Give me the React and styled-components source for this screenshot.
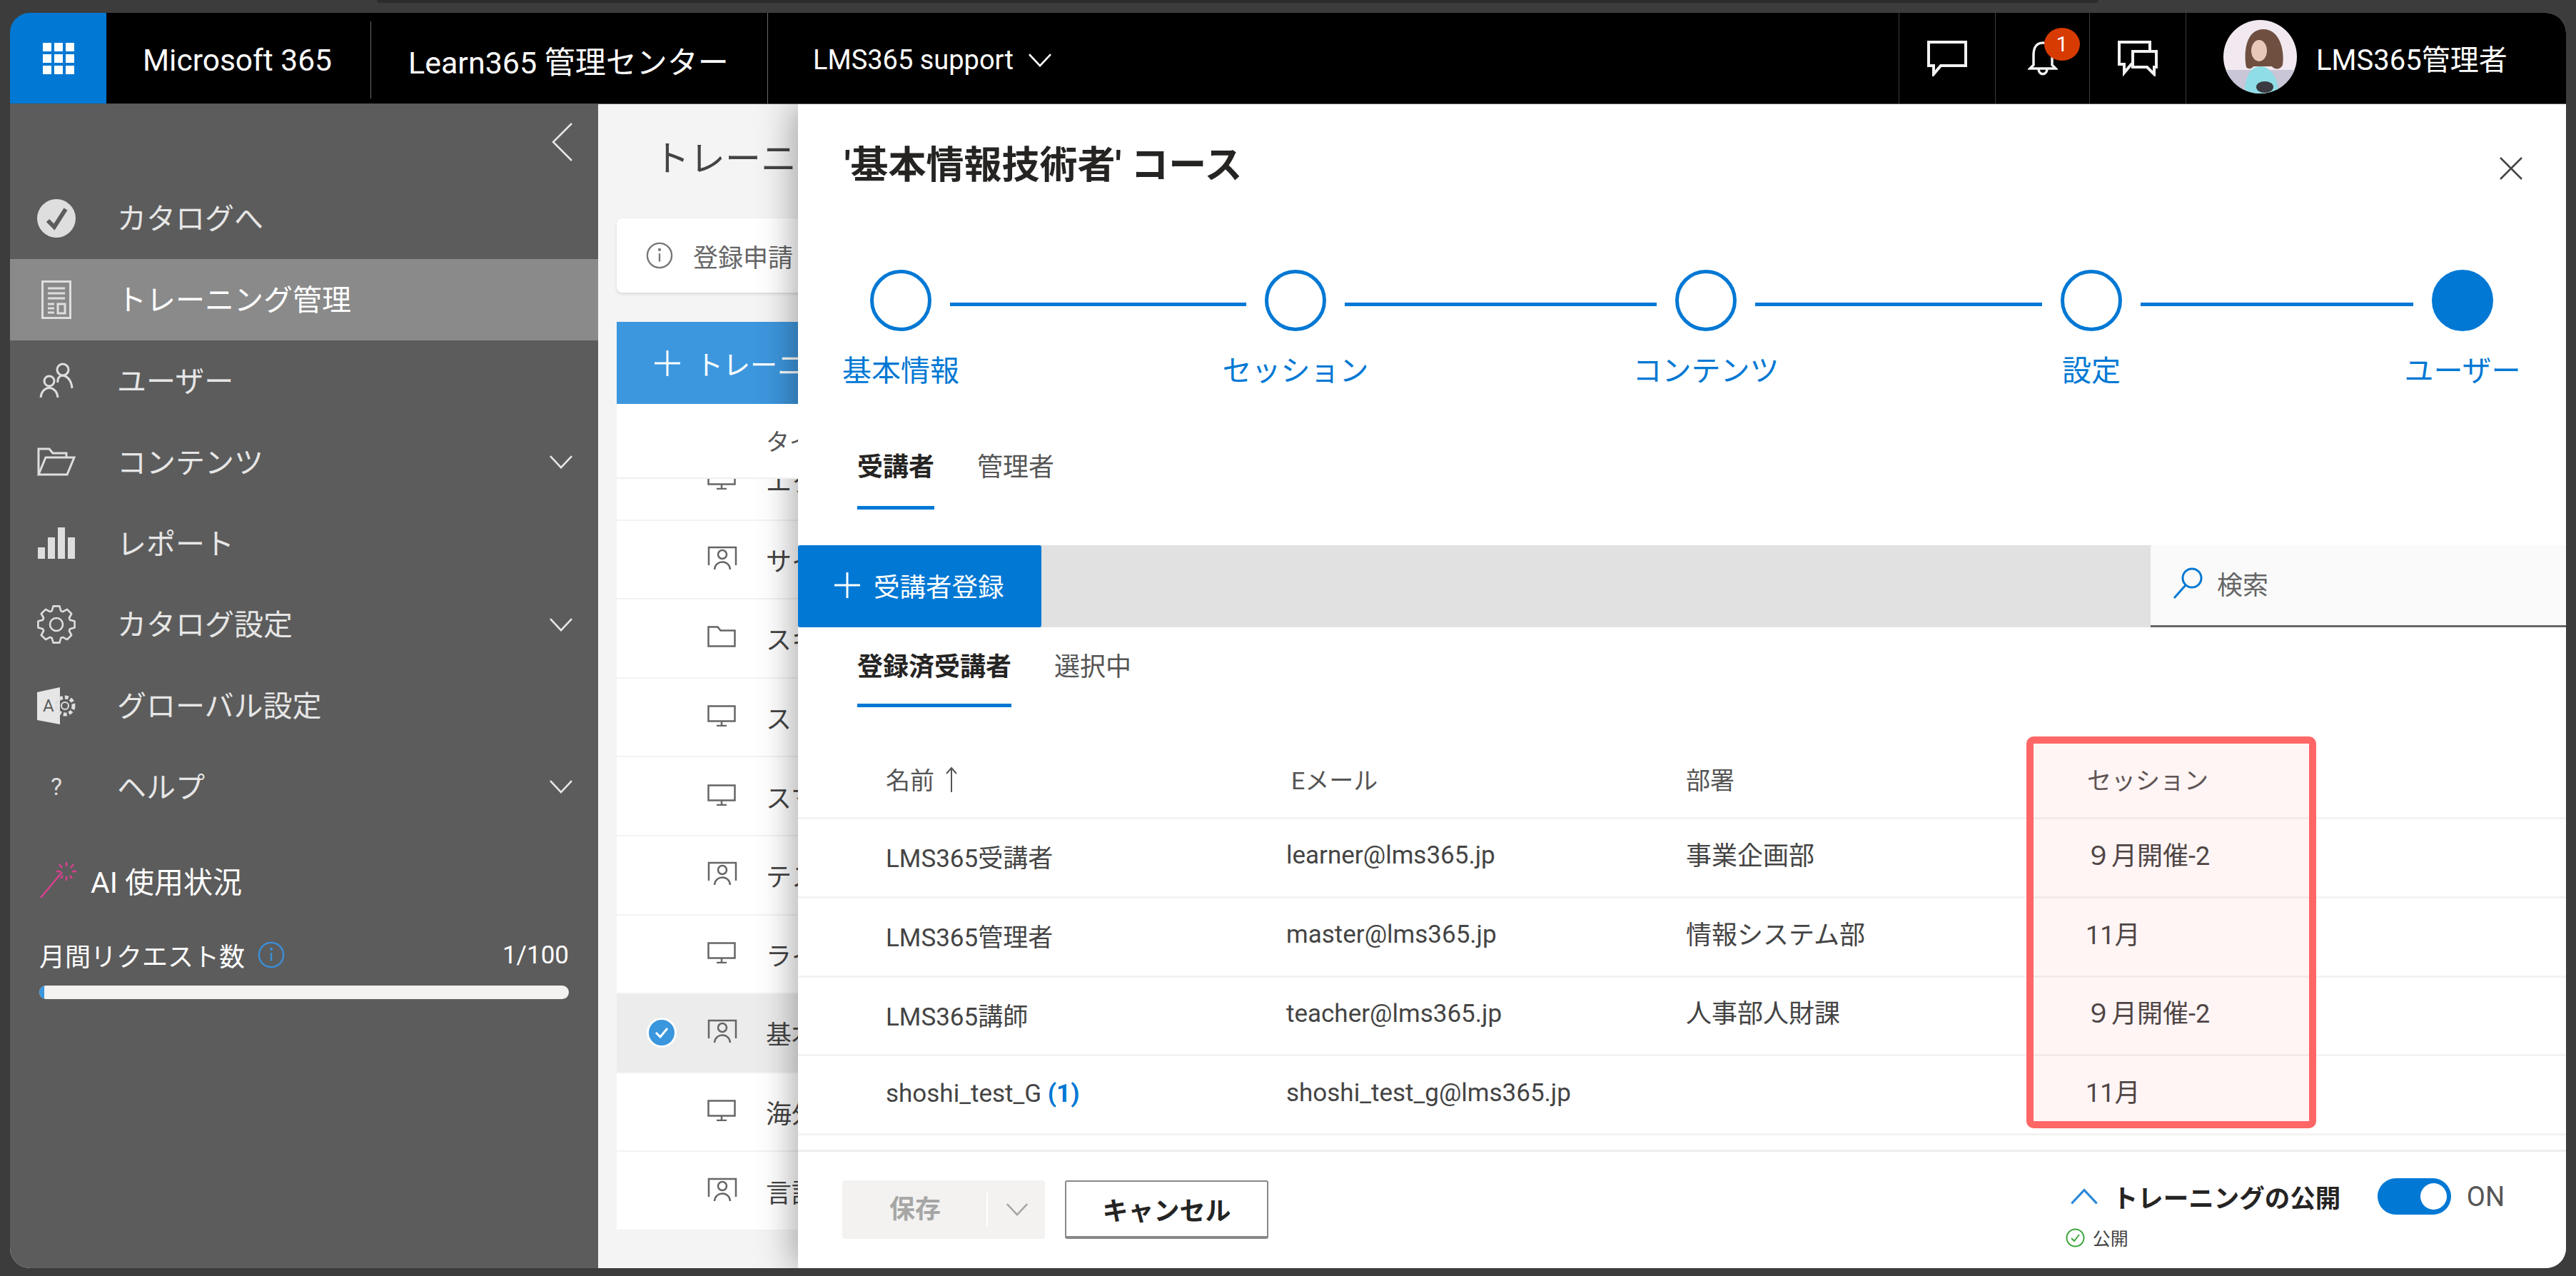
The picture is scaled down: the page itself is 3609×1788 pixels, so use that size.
import { Fragment } from "react";
import styled, { createGlobalStyle } from "styled-components";

const GlobalStyle = createGlobalStyle`
  html, body {
    margin: 0;
    width: 3609px;
    height: 1788px;
    overflow: hidden;
    background: #3c3c3c;
    font-family: Roboto, "Noto Sans CJK JP", sans-serif;
  }
  * { box-sizing: border-box; }
`;

const Page = styled.div`
  width: 3609px;
  height: 1788px;
  padding: 0 14px;
`;

const TopStrip = styled.div`
  width: 2412px;
  height: 4px;
  margin-left: 514px;
  background: #2c2c2c;
  border-radius: 0 0 10px 10px;
`;

const Frame = styled.div`
  margin-top: 14px;
  width: 3581px;
  height: 1759px;
  display: flex;
  flex-direction: column;
  border-radius: 28px;
  overflow: hidden;
  background: #f4f4f4;
`;

/* top bar */
const Header = styled.header`
  height: 128px;
  flex: none;
  display: flex;
  align-items: stretch;
  background: #000;
  color: #fff;
  border-bottom: 1px solid #555;
`;

const Waffle = styled.div`
  width: 135px;
  background: #0078d4;
  display: flex;
  align-items: center;
  justify-content: center;
`;

const WaffleGrid = styled.div`
  display: grid;
  grid-template-columns: repeat(3, 12px);
  grid-auto-rows: 12px;
  gap: 4px;
  span { background: #fff; }
`;

const Brand = styled.div`
  width: ${(p) => p.$width}px;
  padding-left: ${(p) => p.$pad}px;
  padding-top: 5px;
  display: flex;
  align-items: center;
  gap: 20px;
  font-size: ${(p) => p.$size}px;
  white-space: nowrap;
`;

const ShortDivider = styled.div`
  width: 1px;
  height: 108px;
  margin-top: 12px;
  background: #6a6a6a;
`;

const TallDivider = styled.div`
  width: 1px;
  background: #6a6a6a;
`;

const HeaderSpacer = styled.div`
  flex: 1;
`;

const IconCell = styled.div`
  position: relative;
  width: ${(p) => p.$width}px;
  border-left: 1px solid #3b3b3b;
  display: flex;
  align-items: center;
  justify-content: center;
`;

const Badge = styled.span`
  position: absolute;
  left: 68px;
  top: 21px;
  width: 50px;
  height: 46px;
  border-radius: 50%;
  background: #d83b01;
  color: #fff;
  font-size: 29px;
  display: flex;
  align-items: center;
  justify-content: center;
`;

const UserCell = styled.div`
  width: 533px;
  padding-left: 52px;
  padding-bottom: 2px;
  border-left: 1px solid #3b3b3b;
  display: flex;
  align-items: center;
  gap: 27px;
  font-size: 40px;
  white-space: nowrap;
`;

const AvatarSvg = styled.svg`
  width: 103px;
  height: 103px;
  margin-top: -2px;
`;

/* left navigation */
const Body = styled.div`
  flex: 1;
  display: flex;
  min-height: 0;
  overflow: hidden;
`;

const Sidebar = styled.aside`
  width: 824px;
  flex: none;
  background: #5c5c5c;
  color: #e9e9e9;
  display: flex;
  flex-direction: column;
`;

const CollapseRow = styled.div`
  height: 103px;
  padding: 26px 35px 0 0;
  display: flex;
  justify-content: flex-end;
`;

const NavItem = styled.div`
  height: 113.8px;
  padding: 0 35px 0 38px;
  display: flex;
  align-items: center;
  font-size: 41px;
  background: ${(p) => (p.$active ? "#8a8a8a" : "transparent")};
  color: ${(p) => (p.$active ? "#fff" : "#e6e6e6")};
`;

const NavIcon = styled.span`
  width: 54px;
  margin-right: 58px;
  display: flex;
  justify-content: center;
  color: #dedede;
  font-size: 34px;
`;

const NavLabel = styled.span`
  flex: 1;
  padding-bottom: 5px;
`;

const AiTitle = styled.div`
  margin: 46px 0 0 41px;
  height: 56px;
  display: flex;
  align-items: center;
  gap: 18px;
  font-size: 41px;
  color: #fff;
`;

const UsageRow = styled.div`
  margin: 55px 41px 0;
  height: 44px;
  display: flex;
  align-items: center;
  justify-content: space-between;
  font-size: 36px;
  color: #fff;
`;

const UsageLabel = styled.span`
  display: flex;
  align-items: center;
  gap: 18px;
`;

const UsageCount = styled.span`
  font-size: 35px;
`;

const ProgressTrack = styled.div`
  margin: 21px 41px 0;
  height: 19px;
  border-radius: 10px;
  background: #f3f2f1;
  overflow: hidden;
`;

const ProgressFill = styled.div`
  height: 100%;
  background: #3a96dd;
`;

/* list behind the panel */
const Behind = styled.main`
  width: 280px;
  flex: none;
  overflow: hidden;
  background: #f4f4f4;
  padding-left: 26px;
  color: #444;
`;

const BehindTitle = styled.h1`
  margin: 46px 0 0 52px;
  height: 62px;
  font-size: 50px;
  line-height: 62px;
  font-weight: 400;
  white-space: nowrap;
`;

const Notice = styled.div`
  margin-top: 52px;
  height: 104px;
  width: 400px;
  padding-left: 41px;
  display: flex;
  align-items: center;
  gap: 28px;
  background: #fff;
  border-radius: 8px;
  box-shadow: 0 2px 4px rgba(0, 0, 0, 0.12);
  font-size: 35px;
  color: #666;
  white-space: nowrap;
`;

const CreateButton = styled.div`
  margin-top: 41px;
  height: 115px;
  width: 500px;
  padding-left: 53px;
  display: flex;
  align-items: center;
  gap: 22px;
  background: #3d97de;
  color: #fff;
  font-size: 38px;
  white-space: nowrap;
`;

const ListPanel = styled.div`
  width: 500px;
  height: 1158px;
  background: #fff;
  overflow: hidden;
`;

const ListHead = styled.div`
  position: relative;
  z-index: 1;
  height: 105px;
  padding: 27px 0 0 209px;
  background: #fff;
  border-bottom: 2px solid #f0f0f0;
  font-size: 33px;
  color: #555;
`;

const ListRow = styled.div`
  height: 110.6px;
  display: flex;
  align-items: center;
  background: ${(p) => (p.$selected ? "#ececec" : "#fff")};
  border-bottom: 2px solid #f2f2f2;
  font-size: 36px;
  white-space: nowrap;
  ${ListHead} + & { margin-top: -52px; }
`;

const RowCheck = styled.span`
  width: 42px;
  height: 42px;
  margin-left: 42px;
  border-radius: 50%;
  background: #3a96dd;
  border: 3px solid #fff;
  display: flex;
  align-items: center;
  justify-content: center;
`;

const RowIcon = styled.span`
  width: 42px;
  margin-left: ${(p) => (p.$checked ? "43px" : "127px")};
  margin-right: 40px;
  margin-bottom: 4px;
  display: flex;
  color: #666;
`;

/* slide-in panel */
const Panel = styled.section`
  position: relative;
  flex: 1;
  min-width: 0;
  background: #fff;
  box-shadow: -6px 0 46px rgba(0, 0, 0, 0.34);
  display: flex;
  flex-direction: column;
`;

const PanelHead = styled.div`
  height: 232px;
  flex: none;
  padding: 56px 61px 0 65px;
  display: flex;
  justify-content: space-between;
`;

const PanelTitle = styled.h2`
  margin: 0;
  font-size: 53px;
  line-height: 60px;
  font-weight: 700;
  color: #252423;
  white-space: nowrap;
`;

const CloseIcon = styled.svg`
  width: 32px;
  height: 32px;
  margin-top: 18px;
`;

const Stepper = styled.div`
  padding-left: 101px;
  display: flex;
  align-items: flex-start;
`;

const Step = styled.div`
  width: 86px;
  flex: none;
  display: flex;
  flex-direction: column;
  align-items: center;
  font-size: 41px;
  color: #0078d4;
  white-space: nowrap;
`;

const StepDot = styled.div`
  width: 86px;
  height: 86px;
  border-radius: 50%;
  border: 5px solid #0078d4;
  background: ${(p) => (p.$done ? "#0078d4" : "#fff")};
`;

const StepLabel = styled.span`
  margin-top: 32px;
  line-height: 48px;
`;

const StepLine = styled.div`
  width: ${(p) => p.$width}px;
  height: 5px;
  margin: 46px 26px 0;
  background: #0078d4;
`;

const TabRow = styled.div`
  margin-top: ${(p) => p.$top}px;
  padding-left: 83px;
  display: flex;
  gap: 60px;
  font-size: 36px;
`;

const Tab = styled.div`
  line-height: 50px;
  padding-bottom: ${(p) => p.$pad}px;
  border-bottom: 5px solid ${(p) => (p.$active ? "#0078d4" : "transparent")};
  font-weight: ${(p) => (p.$active ? 700 : 400)};
  color: ${(p) => (p.$active ? "#252423" : "#555")};
  white-space: nowrap;
`;

const Toolbar = styled.div`
  margin-top: 50px;
  height: 115px;
  flex: none;
  display: flex;
  justify-content: space-between;
  background: #e1e1e1;
`;

const AddButton = styled.div`
  width: 341px;
  padding: 0 0 3px 51px;
  display: flex;
  align-items: center;
  gap: 19px;
  background: #0078d4;
  border-radius: 3px;
  color: #fff;
  font-size: 36.5px;
  white-space: nowrap;
`;

const SearchBox = styled.div`
  width: 582px;
  padding: 0 0 6px 31px;
  display: flex;
  align-items: center;
  gap: 20px;
  background: #fafafa;
  border-bottom: 3px solid #666;
  border-radius: 3px 0 0 0;
  font-size: 36px;
  color: #666;
`;

const TableWrap = styled.div`
  position: relative;
  margin-top: 47px;
  height: 553px;
  flex: none;
`;

const Highlight = styled.div`
  position: absolute;
  left: 1721px;
  top: -6px;
  width: 406px;
  height: 549px;
  border: 10px solid #ff6666;
  border-radius: 10px;
  background: rgba(255, 90, 90, 0.06);
  pointer-events: none;
`;

const GridRow = styled.div`
  height: ${(p) => (p.$head ? "110px" : "110.75px")};
  padding-left: 123px;
  display: grid;
  grid-template-columns: 568px 553px 562px 1fr;
  align-items: center;
  border-bottom: 3px solid #f3f3f3;
  font-size: 35px;
  color: #444;
`;

const NameCell = styled.div`
  padding-bottom: 4px;
  white-space: nowrap;
`;

const HeadCell = styled.div`
  display: flex;
  align-items: center;
  gap: 16px;
  font-size: 34px;
  color: #555;
`;

const EmailCell = styled.div`
  margin-left: -7px;
  padding-bottom: 6px;
  white-space: nowrap;
`;

const DeptCell = styled.div`
  padding-bottom: 12px;
  font-size: 36px;
  white-space: nowrap;
`;

const SessionCell = styled.div`
  margin-left: -2px;
  padding-bottom: 12px;
  font-size: 36px;
  white-space: nowrap;
`;

const Count = styled.b`
  color: #0078d4;
`;

const Footer = styled.footer`
  margin-top: 20px;
  flex: 1;
  border-top: 3px solid #eee;
  padding: 37px 86px 0 62px;
  display: flex;
  justify-content: space-between;
  align-items: flex-start;
`;

const FooterButtons = styled.div`
  display: flex;
  gap: 28px;
  padding-top: 3px;
`;

const SaveButton = styled.div`
  width: 284px;
  height: 82px;
  display: flex;
  align-items: center;
  background: #f3f2f1;
  border-radius: 4px;
  color: #a6a6a6;
  font-size: 36px;
  font-weight: 700;
`;

const SaveLabel = styled.span`
  width: 204px;
  padding-left: 66px;
  height: 48px;
  line-height: 48px;
  border-right: 2px solid #fff;
`;

const SaveChevron = styled.span`
  margin-left: 25px;
  display: flex;
  color: #a6a6a6;
`;

const CancelButton = styled.div`
  width: 285px;
  height: 82px;
  display: flex;
  align-items: center;
  justify-content: center;
  border: 2px solid #8a8886;
  border-bottom-width: 4px;
  border-radius: 3px;
  font-size: 36px;
  font-weight: 700;
  color: #252423;
`;

const PublishBlock = styled.div`
  display: flex;
  flex-direction: column;
  gap: 17px;
`;

const PublishRow = styled.div`
  height: 51px;
  display: flex;
  align-items: center;
`;

const PublishChevron = styled.span`
  display: flex;
  margin-right: 20px;
  color: #2b88d8;
`;

const PublishLabel = styled.span`
  width: 371px;
  font-size: 35.5px;
  font-weight: 700;
  color: #252423;
`;

const Toggle = styled.div`
  width: 103px;
  height: 51px;
  padding-right: 6px;
  border-radius: 26px;
  background: #0078d4;
  display: flex;
  align-items: center;
  justify-content: flex-end;
  &::after {
    content: "";
    width: 37px;
    height: 37px;
    border-radius: 50%;
    background: #fff;
  }
`;

const ToggleText = styled.span`
  margin-left: 22px;
  font-size: 38px;
  color: #555;
`;

const PublishState = styled.div`
  margin-left: -6px;
  height: 30px;
  display: flex;
  align-items: center;
  gap: 11px;
  font-size: 25px;
  color: #444;
`;

const Chevron = ({ size = 34, dir = "down", color = "currentColor", width = 2.6 }) => (
  <svg
    width={size}
    height={size * 0.6}
    viewBox="0 0 34 20"
    fill="none"
    stroke={color}
    strokeWidth={width}
    style={dir === "up" ? { transform: "rotate(180deg)" } : undefined}
  >
    <path d="M2 2 17 18 32 2" />
  </svg>
);

const InfoIcon = ({ size, color }) => (
  <svg width={size} height={size} viewBox="0 0 40 40" fill="none" stroke={color} strokeWidth="2.5">
    <circle cx="20" cy="20" r="18" />
    <path d="M20 17v12" />
    <circle cx="20" cy="11.5" r="1" fill={color} />
  </svg>
);

const PlusIcon = ({ size = 36 }) => (
  <svg width={size} height={size} viewBox="0 0 36 36" stroke="#fff" strokeWidth="3">
    <path d="M18 0v36M0 18h36" />
  </svg>
);

const PersonBoard = () => (
  <svg width="42" height="34" viewBox="0 0 42 34" fill="none" stroke="#666" strokeWidth="2.5">
    <path d="M2 27V2h38v25" />
    <circle cx="21" cy="12" r="6" />
    <path d="M10 33c1-14 21-14 22 0" />
  </svg>
);

const Monitor = () => (
  <svg width="40" height="30" viewBox="0 0 40 30" fill="none" stroke="#666" strokeWidth="2.5">
    <rect x="1.5" y="1.5" width="37" height="21" />
    <path d="M20 23v5M13 29h14" />
  </svg>
);

const FolderLine = () => (
  <svg width="40" height="30" viewBox="0 0 40 30" fill="none" stroke="#666" strokeWidth="2.5">
    <path d="M1.5 28.500V1.500h13l4 5h20v22z" />
  </svg>
);

const CatalogIcon = () => (
  <svg width="54" height="54" viewBox="0 0 54 54">
    <circle cx="27" cy="27" r="27" fill="#dedede" />
    <path d="M15 30l9 9 16-25" fill="none" stroke="#5c5c5c" strokeWidth="6" />
  </svg>
);

const TrainingIcon = () => (
  <svg width="42" height="54" viewBox="0 0 42 54" fill="none" stroke="#dedede" strokeWidth="3">
    <rect x="1.500" y="1.500" width="39" height="51" />
    <path d="M9 11h24M9 18h24M9 25h24M9 33h9M9 39h9M9 45h9" />
    <rect x="23" y="33" width="10" height="13" />
  </svg>
);

const UsersIcon = () => (
  <svg width="48" height="50" viewBox="0 0 48 50" fill="none" stroke="#dedede" strokeWidth="3">
    <circle cx="33" cy="10" r="8" />
    <path d="M26 28c-2-14 18-14 20 8" />
    <circle cx="14" cy="26" r="7" />
    <path d="M2 49c2-18 22-18 24 0" />
  </svg>
);

const FolderOpenIcon = () => (
  <svg width="54" height="40" viewBox="0 0 54 40" fill="none" stroke="#dedede" strokeWidth="3">
    <path d="M2 37V2h15l5 6h19v6" />
    <path d="M2 38l10-24h40l-10 24z" />
  </svg>
);

const BarsIcon = () => (
  <svg width="52" height="44" viewBox="0 0 52 44" fill="#dedede">
    <rect x="0" y="28" width="10" height="16" />
    <rect x="14" y="14" width="10" height="30" />
    <rect x="28" y="0" width="10" height="44" />
    <rect x="42" y="14" width="10" height="30" />
  </svg>
);

// 8 toothed cog outline, the lucide one has thinner teeth than the screenshot
const gearPath = () => {
  const points = [];
  for (let i = 0; i < 8; i++) {
    const a = (i * Math.PI) / 4;
    [
      [-0.32, 20],
      [-0.17, 26],
      [0.17, 26],
      [0.32, 20],
    ].forEach(([da, r]) => {
      points.push(`${(27 + r * Math.sin(a + da)).toFixed(1)} ${(27 - r * Math.cos(a + da)).toFixed(1)}`);
    });
  }
  return `M${points.join("L")}Z`;
};

const GearIcon = () => (
  <svg width="54" height="54" viewBox="0 0 54 54" fill="none" stroke="#dedede" strokeWidth="2.6" strokeLinejoin="round">
    <path d={gearPath()} />
    <circle cx="27" cy="27" r="9" />
  </svg>
);

const GlobalIcon = () => (
  <svg width="54" height="52" viewBox="0 0 54 52">
    <path d="M0 7 32 0v52L0 46z" fill="#e6e6e6" />
    <text x="8" y="34" fontSize="24" fontFamily="Roboto, sans-serif" fill="#5c5c5c">A</text>
    <circle cx="39" cy="26" r="12" fill="none" stroke="#dedede" strokeWidth="5" strokeDasharray="5 3" />
    <circle cx="39" cy="26" r="5" fill="none" stroke="#dedede" strokeWidth="2" />
  </svg>
);

const WandIcon = () => (
  <svg width="54" height="54" viewBox="0 0 54 54" fill="none" stroke="#d8408f" strokeWidth="2.500">
    <path d="M2 52 32 16" />
    <path d="M38 2v6M38 22v6M24 15h6M46 15h6M28 5l4 5M48 5l-4 5M30 25l3-4M46 25l-3-4" />
  </svg>
);

const Avatar = () => (
  <AvatarSvg viewBox="0 0 103 103">
    <defs>
      <clipPath id="avatar-clip">
        <circle cx="51.500" cy="51.500" r="51.500" />
      </clipPath>
    </defs>
    <g clipPath="url(#avatar-clip)">
      <rect width="103" height="103" fill="#f1e9ef" />
      <rect y="70" width="103" height="33" fill="#c9c6d8" />
      <path d="M32 66c-4-22 0-53 24-53s30 32 27 50c-4 8-12 6-15 2H42c-2 4-8 4-10 1z" fill="#6e4f40" />
      <ellipse cx="50" cy="43" rx="11" ry="15" fill="#e8c8b8" />
      <path d="M30 103c0-24 8-38 22-38s24 16 26 38z" fill="#8fdde6" />
      <ellipse cx="58" cy="94" rx="12" ry="8" fill="#3a3a40" />
    </g>
  </AvatarSvg>
);

const navItems = [
  { label: "カタログへ", icon: <CatalogIcon /> },
  { label: "トレーニング管理", icon: <TrainingIcon />, active: true },
  { label: "ユーザー", icon: <UsersIcon /> },
  { label: "コンテンツ", icon: <FolderOpenIcon />, more: true },
  { label: "レポート", icon: <BarsIcon /> },
  { label: "カタログ設定", icon: <GearIcon />, more: true },
  { label: "グローバル設定", icon: <GlobalIcon /> },
  { label: "ヘルプ", icon: "?", more: true },
];

const listRows = [
  { title: "エクセル研修", Icon: Monitor },
  { title: "サイバー研修", Icon: PersonBoard },
  { title: "スキル研修", Icon: FolderLine },
  { title: "ストレス研修", Icon: Monitor },
  { title: "スマホ研修", Icon: Monitor },
  { title: "テスト研修", Icon: PersonBoard },
  { title: "ライブ研修", Icon: Monitor },
  { title: "基本情報技術者", Icon: PersonBoard, selected: true },
  { title: "海外研修", Icon: Monitor },
  { title: "言語研修", Icon: PersonBoard },
];

const steps = [
  { label: "基本情報", line: 415 },
  { label: "セッション", line: 437 },
  { label: "コンテンツ", line: 402 },
  { label: "設定", line: 382 },
  { label: "ユーザー", done: true },
];

const learners = [
  { name: "LMS365受講者", email: "learner@lms365.jp", dept: "事業企画部", session: "９月開催-2" },
  { name: "LMS365管理者", email: "master@lms365.jp", dept: "情報システム部", session: "11月" },
  { name: "LMS365講師", email: "teacher@lms365.jp", dept: "人事部人財課", session: "９月開催-2" },
  { name: "shoshi_test_G", count: 1, email: "shoshi_test_g@lms365.jp", dept: "", session: "11月" },
];

const App = () => {
  return (
    <>
      <GlobalStyle />
      <Page>
        <TopStrip />
        <Frame>
          <Header>
            <Waffle>
              <WaffleGrid>
                {Array.from({ length: 9 }).map((_, i) => (
                  <span key={i} />
                ))}
              </WaffleGrid>
            </Waffle>
            <Brand $width={370} $pad={51} $size={42.5}>Microsoft 365</Brand>
            <ShortDivider />
            <Brand $width={555} $pad={52} $size={43}>Learn365 管理センター</Brand>
            <TallDivider />
            <Brand $pad={63} $size={38}>
              LMS365 support
              <Chevron color="#fff" />
            </Brand>
            <HeaderSpacer />
            <IconCell $width={135}>
              <svg width="56" height="50" viewBox="0 0 56 50" fill="none" stroke="#f2f2f2" strokeWidth="4">
                <path d="M2 2h52v33H19L9 47V35H2z" />
              </svg>
            </IconCell>
            <IconCell $width={132}>
              <svg width="42" height="48" viewBox="0 0 42 48" fill="none" stroke="#f2f2f2" strokeWidth="3.500">
                <path d="M21 2C11 2 8 11 8 19v14l-5 5h36l-5-5V19C34 11 31 2 21 2z" />
                <path d="M15 39c1 9 11 9 12 0" />
              </svg>
              <Badge>1</Badge>
            </IconCell>
            <IconCell $width={135}>
              <svg width="56" height="50" viewBox="0 0 56 50" fill="none" stroke="#f2f2f2" strokeWidth="4">
                <path d="M45 14V2H2v31h7v12l10-12h2" />
                <path d="M21 15h33v22h-3v10l-10-10H21z" />
              </svg>
            </IconCell>
            <UserCell>
              <Avatar />
              LMS365管理者
            </UserCell>
          </Header>
          <Body>
            <Sidebar>
              <CollapseRow>
                <svg width="30" height="54" viewBox="0 0 30 54" fill="none" stroke="#e6e6e6" strokeWidth="2.500">
                  <path d="M28 1 2 27l26 26" />
                </svg>
              </CollapseRow>
              {navItems.map((item) => (
                <NavItem key={item.label} $active={item.active}>
                  <NavIcon>{item.icon}</NavIcon>
                  <NavLabel>{item.label}</NavLabel>
                  {item.more && <Chevron color="#e6e6e6" />}
                </NavItem>
              ))}
              <AiTitle>
                <WandIcon />
                AI 使用状況
              </AiTitle>
              <UsageRow>
                <UsageLabel>
                  月間リクエスト数
                  <InfoIcon size={38} color="#3a8fd8" />
                </UsageLabel>
                <UsageCount>1/100</UsageCount>
              </UsageRow>
              <ProgressTrack>
                <ProgressFill style={{ width: "1%" }} />
              </ProgressTrack>
            </Sidebar>

            <Behind>
              <BehindTitle>トレーニング管理</BehindTitle>
              <Notice>
                <InfoIcon size={38} color="#777" />
                登録申請
              </Notice>
              <CreateButton>
                <PlusIcon />
                トレーニング作成
              </CreateButton>
              <ListPanel>
                <ListHead>タイトル</ListHead>
                {listRows.map(({ title, Icon, selected }) => (
                  <ListRow key={title} $selected={selected}>
                    {selected && (
                      <RowCheck>
                        <svg width="20" height="16" viewBox="0 0 20 16" fill="none" stroke="#fff" strokeWidth="3">
                          <path d="M2 8l6 6L18 2" />
                        </svg>
                      </RowCheck>
                    )}
                    <RowIcon $checked={selected}>
                      <Icon />
                    </RowIcon>
                    {title}
                  </ListRow>
                ))}
              </ListPanel>
            </Behind>

            <Panel>
              <PanelHead>
                <PanelTitle>'基本情報技術者' コース</PanelTitle>
                <CloseIcon viewBox="0 0 32 32" stroke="#444" strokeWidth="2.500">
                  <path d="M1 1l30 30M31 1 1 31" />
                </CloseIcon>
              </PanelHead>

              <Stepper>
                {steps.map((step) => (
                  <Fragment key={step.label}>
                    <Step>
                      <StepDot $done={step.done} />
                      <StepLabel>{step.label}</StepLabel>
                    </Step>
                    {step.line && <StepLine $width={step.line} />}
                  </Fragment>
                ))}
              </Stepper>

              <TabRow $top={86}>
                <Tab $active $pad={29}>受講者</Tab>
                <Tab $pad={29}>管理者</Tab>
              </TabRow>

              <Toolbar>
                <AddButton>
                  <PlusIcon />
                  受講者登録
                </AddButton>
                <SearchBox>
                  <svg width="42" height="44" viewBox="0 0 42 44" fill="none" stroke="#0078d4" strokeWidth="3">
                    <circle cx="27" cy="15" r="13" />
                    <path d="M18 25 2 43" />
                  </svg>
                  検索
                </SearchBox>
              </Toolbar>

              <TabRow $top={31}>
                <Tab $active $pad={26}>登録済受講者</Tab>
                <Tab $pad={26}>選択中</Tab>
              </TabRow>

              <TableWrap>
                <GridRow $head>
                  <HeadCell>
                    名前
                    <svg width="16" height="36" viewBox="0 0 16 36" fill="none" stroke="#555" strokeWidth="2">
                      <path d="M8 36V2M1 10l7-8 7 8" />
                    </svg>
                  </HeadCell>
                  <HeadCell>Eメール</HeadCell>
                  <HeadCell>部署</HeadCell>
                  <HeadCell>セッション</HeadCell>
                </GridRow>
                {learners.map((row) => (
                  <GridRow key={row.email}>
                    <NameCell>
                      {row.name} {row.count && <Count>({row.count})</Count>}
                    </NameCell>
                    <EmailCell>{row.email}</EmailCell>
                    <DeptCell>{row.dept}</DeptCell>
                    <SessionCell>{row.session}</SessionCell>
                  </GridRow>
                ))}
                <Highlight />
              </TableWrap>

              <Footer>
                <FooterButtons>
                  <SaveButton>
                    <SaveLabel>保存</SaveLabel>
                    <SaveChevron>
                      <Chevron size={32} />
                    </SaveChevron>
                  </SaveButton>
                  <CancelButton>キャンセル</CancelButton>
                </FooterButtons>
                <PublishBlock>
                  <PublishRow>
                    <PublishChevron>
                      <Chevron size={40} dir="up" />
                    </PublishChevron>
                    <PublishLabel>トレーニングの公開</PublishLabel>
                    <Toggle />
                    <ToggleText>ON</ToggleText>
                  </PublishRow>
                  <PublishState>
                    <svg width="27" height="27" viewBox="0 0 27 27" fill="none" stroke="#3da63d" strokeWidth="2">
                      <circle cx="13.500" cy="13.500" r="12" />
                      <path d="M8 14l4 4 7-9" />
                    </svg>
                    公開
                  </PublishState>
                </PublishBlock>
              </Footer>
            </Panel>
          </Body>
        </Frame>
      </Page>
    </>
  );
};

export default App;
